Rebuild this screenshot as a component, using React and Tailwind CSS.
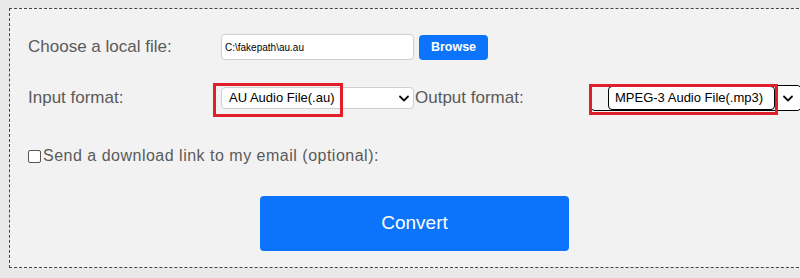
import React from 'react'

const font = { fontFamily: '"Liberation Sans", Arial, sans-serif' }

function Chevron({ className = '' }) {
  return (
    <svg viewBox="0 0 10 6" className={className} fill="none" stroke="#111" strokeWidth="1.8" strokeLinecap="round" strokeLinejoin="round">
      <path d="M1 1l4 4 4-4" />
    </svg>
  )
}

export default function App() {
  return (
    <div className="w-[800px] h-[278px] overflow-hidden bg-[#e9e9e9] pl-[9px] pt-[8px]" style={font}>
      <div className="w-[830px] h-[260px] border border-dashed border-[#444] bg-[#f2f2f2] pl-[18px] pt-[25px]">
        {/* file row */}
        <div className="flex items-center h-[26px]">
          <div className="w-[193px] text-[17px] text-[#5a5a5a]">Choose a local file:</div>
          <div className="w-[193px] h-[26px] bg-white border border-[#cfcfcf] rounded-[4px] flex items-center pl-[3px] text-[10px] text-black">
            C:\fakepath\au.au
          </div>
          <button className="ml-[5px] w-[69px] h-[25px] rounded-[4px] bg-[#0b74fa] text-white text-[12.5px] font-bold">
            Browse
          </button>
        </div>

        {/* format row */}
        <div className="flex items-center h-[22px] mt-[27px]">
          <div className="w-[193px] text-[17px] text-[#5a5a5a]">Input format:</div>
          <div className="relative w-[193px] h-[22px] bg-white border border-[#cfcfcf] rounded-[4px] flex items-center justify-between pl-[7px] pr-[4px] text-[13px] text-black">
            <span>AU Audio File(.au)</span>
            <Chevron className="w-[10px] h-[7px]" />
            <div className="absolute left-[-9px] top-[-5px] w-[130px] h-[34px] border-[3px] border-[#df1f2b]" />
          </div>
          <div className="w-[176px] pl-[1px] text-[17px] text-[#5a5a5a]">Output format:</div>
          <div className="relative w-[212px] h-[26px] border border-black rounded-[5px] flex items-center bg-[#f4f4f4]">
            <div className="ml-[17px] w-[167px] h-[24px] bg-white border-[1.5px] border-black rounded-[4px] flex items-center pl-[6px] text-[13px] text-black">
              MPEG-3 Audio File(.mp3)
            </div>
            <div className="flex-1 h-full bg-white rounded-r-[5px] flex items-center pl-[8px]">
              <Chevron className="w-[10px] h-[7px]" />
            </div>
            <div className="absolute left-[-2px] top-[-2px] w-[189px] h-[31px] border-[3px] border-[#df1f2b]" />
          </div>
        </div>

        {/* email row */}
        <div className="flex items-center h-[22px] mt-[36px]">
          <span className="w-[13px] h-[13px] bg-white border border-[#555] rounded-[2px]" />
          <span className="ml-[2px] text-[16px] tracking-[0.5px] text-[#5a5a5a]">Send a download link to my email (optional):</span>
        </div>

        {/* convert */}
        <div className="mt-[29px] pl-[232px]">
          <button className="w-[309px] h-[55px] rounded-[4px] bg-[#0b74fa] text-white text-[19px]">
            Convert
          </button>
        </div>
      </div>
    </div>
  )
}
